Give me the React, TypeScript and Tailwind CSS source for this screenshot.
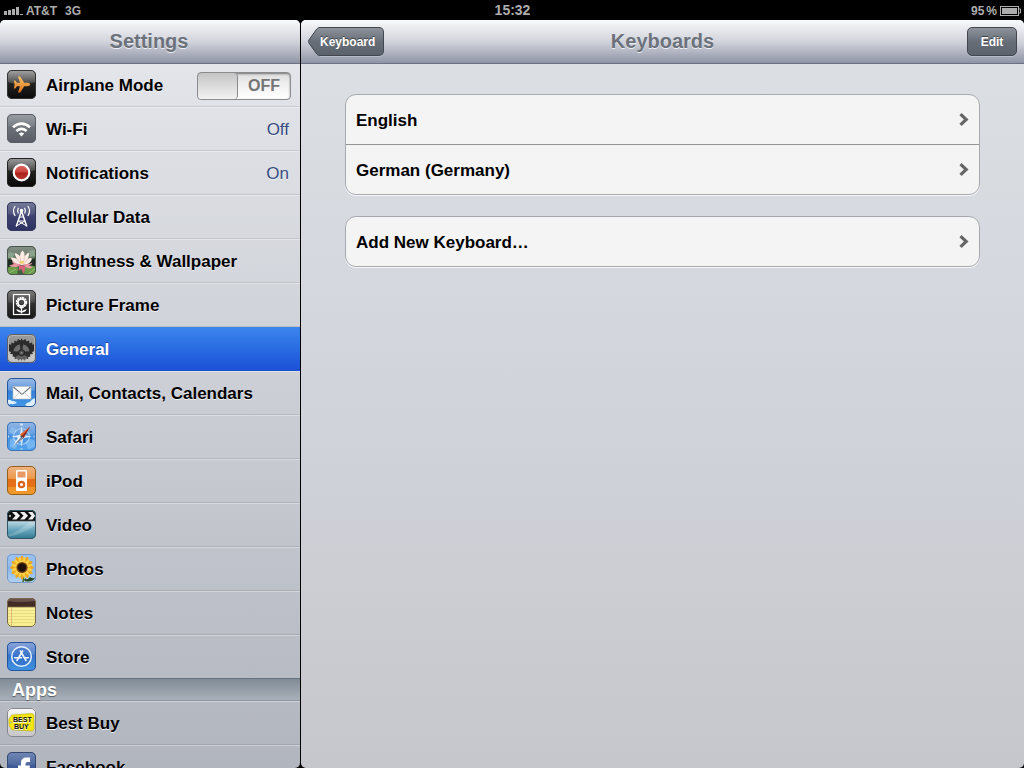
import type { ReactNode } from 'react'

type Row = {
  id: string
  label: string
  icon: ReactNode
  value?: string
  toggle?: boolean
  selected?: boolean
}

const SYSTEM_ROWS: Row[] = [
  { id: 'airplane', label: 'Airplane Mode', icon: <AirplaneIcon />, toggle: true },
  { id: 'wifi', label: 'Wi-Fi', icon: <WifiIcon />, value: 'Off' },
  { id: 'notifications', label: 'Notifications', icon: <NotificationsIcon />, value: 'On' },
  { id: 'cellular', label: 'Cellular Data', icon: <CellularIcon /> },
  { id: 'brightness', label: 'Brightness & Wallpaper', icon: <WallpaperIcon /> },
  { id: 'frame', label: 'Picture Frame', icon: <FrameIcon /> },
  { id: 'general', label: 'General', icon: <GeneralIcon />, selected: true },
  { id: 'mail', label: 'Mail, Contacts, Calendars', icon: <MailIcon /> },
  { id: 'safari', label: 'Safari', icon: <SafariIcon /> },
  { id: 'ipod', label: 'iPod', icon: <IpodIcon /> },
  { id: 'video', label: 'Video', icon: <VideoIcon /> },
  { id: 'photos', label: 'Photos', icon: <PhotosIcon /> },
  { id: 'notes', label: 'Notes', icon: <NotesIcon /> },
  { id: 'store', label: 'Store', icon: <StoreIcon /> },
]

const APP_ROWS: Row[] = [
  { id: 'bestbuy', label: 'Best Buy', icon: <BestBuyIcon /> },
  { id: 'facebook', label: 'Facebook', icon: <FacebookIcon /> },
]

const KEYBOARD_GROUPS = [['English', 'German (Germany)'], ['Add New Keyboard…']]

export default function App() {
  return (
    <div className="flex h-screen flex-col overflow-hidden bg-black font-['Liberation_Sans',Arial,sans-serif]">
      <StatusBar />
      <div className="flex min-h-0 flex-1 gap-px">
        {/* Settings list */}
        <aside className="flex w-[300px] shrink-0 flex-col overflow-hidden rounded-[5px] bg-linear-to-b from-[#e6e8ec] to-[#b1b5be]">
          <header className="flex h-11 shrink-0 items-center justify-center border-b border-[#6d7384] bg-linear-to-b from-[#f8f9fa] via-[#d2d4dc] to-[#9095a6] pr-0.5">
            <Title>Settings</Title>
          </header>
          <nav className="min-h-0 flex-1 overflow-y-auto [scrollbar-width:none]">
            <ul className="-mt-px">
              {SYSTEM_ROWS.map((row) => (
                <SettingsRow key={row.id} row={row} />
              ))}
            </ul>
            <h2 className="-mt-px flex h-[23px] items-center border-t border-b border-t-[#67727e] border-b-[#8d949d] bg-linear-to-b from-[#818c97] to-[#a9b0b9] pl-3 text-lg font-bold text-white [text-shadow:0_1px_1px_#555c66]">
              Apps
            </h2>
            <ul>
              {APP_ROWS.map((row) => (
                <SettingsRow key={row.id} row={row} />
              ))}
            </ul>
          </nav>
        </aside>

        {/* Keyboards pane */}
        <main className="flex min-w-0 flex-1 flex-col overflow-hidden rounded-[5px] bg-linear-to-b from-[#dde1e5] via-[#d1d4db] to-[#c6c7cc]">
          <header className="grid h-11 shrink-0 grid-cols-[1fr_auto_1fr] items-center border-b border-[#6d7384] bg-linear-to-b from-[#f8f9fa] via-[#d2d4dc] to-[#9095a6] px-[7px]">
            <BackButton label="Keyboard" />
            <Title>Keyboards</Title>
            <button
              type="button"
              className="h-[29px] w-[50px] justify-self-end rounded-[5px] border border-[#42474f] bg-linear-to-b from-[#8f949b] via-[#686e78] to-[#5b626c] text-xs font-bold text-white shadow-[0_1px_0_#b9bdc9] [text-shadow:0_-1px_0_#3f444b]"
            >
              Edit
            </button>
          </header>
          <div className="flex flex-col gap-[21px] px-11 pt-[30px]">
            {KEYBOARD_GROUPS.map((group) => (
              <ul
                key={group[0]}
                className="divide-y divide-[#929498] rounded-[11px] border border-[#a6a9ae] bg-[#f4f4f4] shadow-[0_1px_0_#f4f6f9]"
              >
                {group.map((label) => (
                  <li key={label} className="h-[50px] last:h-[49px]">
                    <a
                      href="#keyboard"
                      className="flex h-full items-center justify-between px-2.5 text-[17px] font-bold text-black"
                    >
                      <span className="pt-0.5 leading-6">{label}</span>
                      <Chevron />
                    </a>
                  </li>
                ))}
              </ul>
            ))}
          </div>
        </main>
      </div>
    </div>
  )
}

function StatusBar() {
  return (
    <div className="grid h-5 shrink-0 grid-cols-[1fr_auto_1fr] items-center bg-black pr-[3px] pl-1 text-xs font-bold text-[#adadad]">
      <div className="flex items-center">
        <svg width="19" height="8" viewBox="0 0 19 8" fill="#adadad" aria-hidden="true">
          <rect x="0" y="4" width="3" height="4" />
          <rect x="4" y="3" width="3" height="5" />
          <rect x="8" y="2" width="3" height="6" />
          <rect x="12" y="0" width="3" height="8" />
          <rect x="16" y="7" width="3" height="1" />
        </svg>
        <span className="ml-[3px]">AT&amp;T</span>
        <span className="ml-2">3G</span>
      </div>
      <span className="pb-0.5 text-sm">15:32</span>
      <div className="flex items-center justify-end">
        <span>95</span>
        <span className="mr-[3px] ml-0.5">%</span>
        <svg width="21" height="10" viewBox="0 0 21 10" aria-hidden="true">
          <rect x="0.5" y="0.5" width="18" height="9" fill="none" stroke="#adadad" />
          <rect x="2" y="2" width="15" height="6" fill="#adadad" />
          <path d="M19 3h1.5v4H19" fill="none" stroke="#adadad" />
        </svg>
      </div>
    </div>
  )
}

function Title({ children }: { children: ReactNode }) {
  return (
    <h1 className="pb-0.5 text-xl font-bold text-[#6c727b] [text-shadow:0_1px_0_#eceef2]">
      {children}
    </h1>
  )
}

function BackButton({ label }: { label: string }) {
  return (
    <button
      type="button"
      className="flex h-[29px] items-center justify-self-start text-xs font-bold text-white [text-shadow:0_-1px_0_#3f444b]"
    >
      <svg width="12" height="29" viewBox="0 0 12 29" aria-hidden="true">
        <defs>
          <linearGradient id="back" x1="0" y1="0" x2="0" y2="1">
            <stop offset="0" stopColor="#8f949b" />
            <stop offset="0.5" stopColor="#686e78" />
            <stop offset="1" stopColor="#5b626c" />
          </linearGradient>
        </defs>
        <path
          d="M12 0.5C10 0.5 9 1.5 8 3L0.7 13.3Q0.2 14.5 0.7 15.7L8 26C9 27.5 10 28.5 12 28.5"
          fill="url(#back)"
          stroke="#42474f"
        />
      </svg>
      <span className="flex h-full items-center rounded-r-[5px] border border-l-0 border-[#42474f] bg-linear-to-b from-[#8f949b] via-[#686e78] to-[#5b626c] pr-2 shadow-[0_1px_0_#b9bdc9]">
        {label}
      </span>
    </button>
  )
}

function Chevron() {
  return (
    <svg width="10" height="13" viewBox="0 0 10 13" aria-hidden="true">
      <path d="M1.5 1.2L7.2 6.5L1.5 11.8" fill="none" stroke="#666" strokeWidth="3.2" />
    </svg>
  )
}

function SettingsRow({ row }: { row: Row }) {
  const content = (
    <>
      {row.icon}
      <span className="flex-1 pt-0.5 leading-6">{row.label}</span>
    </>
  )
  return (
    <li
      className={
        row.selected
          ? 'h-11 border-y border-transparent bg-linear-to-b from-[#3c85ee] to-[#1b4fd6] bg-origin-border text-white [text-shadow:0_-1px_0_#1c4293]'
          : 'h-11 border-t border-b border-t-white/35 border-b-black/10 text-black [text-shadow:0_1px_0_#f1f2f4]'
      }
    >
      {row.toggle ? (
        <label className="flex h-full items-center gap-2.5 pr-[9px] pb-px pl-[7px] text-[17px] font-bold">
          {content}
          <input type="checkbox" role="switch" className="peer sr-only" />
          <span className="mt-0.5 flex h-7 w-[94px] overflow-hidden rounded-[4px] border border-[#8a8b8e] bg-linear-to-b from-[#dcdcdc] via-[#f2f2f2] to-white shadow-[inset_0_1px_2px_#777]">
            <span className="w-10 rounded-[4px] border-r border-[#8a8b8e] bg-linear-to-b from-[#c4c4c4] to-[#f3f3f3]" />
            <span className="flex flex-1 items-center justify-center text-base text-[#747474]">
              OFF
            </span>
          </span>
        </label>
      ) : (
        <a
          href={`#${row.id}`}
          className="flex h-full items-center gap-2.5 pr-[11px] pb-px pl-[7px] text-[17px] font-bold"
        >
          {content}
          {row.value && (
            <span className="pt-0.5 leading-6 font-normal text-[#374c80]">{row.value}</span>
          )}
        </a>
      )}
    </li>
  )
}

// Rounded 29px tile shared by every row icon
function Tile({
  id,
  from,
  to,
  border,
  gloss = 0.25,
  children,
}: {
  id: string
  from: string
  to: string
  border: string
  gloss?: number
  children: ReactNode
}) {
  return (
    <svg width="29" height="29" viewBox="0 0 29 29" className="shrink-0" aria-hidden="true">
      <defs>
        <linearGradient id={`${id}-bg`} x1="0" y1="0" x2="0" y2="1">
          <stop offset="0" stopColor={from} />
          <stop offset="1" stopColor={to} />
        </linearGradient>
        <linearGradient id={`${id}-gloss`} x1="0" y1="0" x2="0" y2="1">
          <stop offset="0" stopColor="#fff" stopOpacity={gloss * 1.8} />
          <stop offset="1" stopColor="#fff" stopOpacity={gloss * 0.5} />
        </linearGradient>
        <clipPath id={`${id}-clip`}>
          <rect width="29" height="29" rx="5" />
        </clipPath>
      </defs>
      <g clipPath={`url(#${id}-clip)`}>
        <rect width="29" height="29" fill={`url(#${id}-bg)`} />
        <path d="M0 0H29V12Q14.5 16 0 12Z" fill={`url(#${id}-gloss)`} />
        {children}
      </g>
      <rect x="0.5" y="0.5" width="28" height="28" rx="4.5" fill="none" stroke={border} />
    </svg>
  )
}

function AirplaneIcon() {
  return (
    <Tile id="airplane" from="#3c3c3c" to="#080808" border="#333" gloss={0.3}>
      <defs>
        <linearGradient id="plane" x1="0" y1="0" x2="0" y2="1">
          <stop offset="0" stopColor="#f6c468" />
          <stop offset="1" stopColor="#e0701a" />
        </linearGradient>
      </defs>
      <path
        d="M23.2 14.5C23.2 15.7 21.5 16.2 20 16.2H17.2L13.2 22.6H11L13 16.2H10L8.3 18.6H6.8L7.6 14.5L6.8 10.4H8.3L10 12.8H13L11 6.4H13.2L17.2 12.8H20C21.5 12.8 23.2 13.3 23.2 14.5Z"
        fill="url(#plane)"
      />
    </Tile>
  )
}

function WifiIcon() {
  return (
    <Tile id="wifi" from="#7f848b" to="#565b65" border="#5a5f67" gloss={0.12}>
      <g fill="none" stroke="#fff" strokeWidth="2.6">
        <path d="M6 13.2Q14.5 6.2 23 13.2" />
        <path d="M9.4 17Q14.5 12.8 19.6 17" />
      </g>
      <path d="M11.8 19.6Q14.5 17.6 17.2 19.6L14.5 22.4Z" fill="#fff" />
    </Tile>
  )
}

function NotificationsIcon() {
  return (
    <Tile id="notif" from="#3a3a3a" to="#060606" border="#222" gloss={0.28}>
      <defs>
        <linearGradient id="red" x1="0" y1="0" x2="0" y2="1">
          <stop offset="0" stopColor="#dd6b64" />
          <stop offset="0.48" stopColor="#cb443d" />
          <stop offset="0.52" stopColor="#ab1f1c" />
          <stop offset="1" stopColor="#c03a31" />
        </linearGradient>
      </defs>
      <circle cx="14.5" cy="14.5" r="7.8" fill="url(#red)" stroke="#fff" strokeWidth="2.2" />
    </Tile>
  )
}

function CellularIcon() {
  return (
    <Tile id="cell" from="#4b5078" to="#2d3264" border="#33385c" gloss={0.14}>
      <g fill="none" stroke="#fff">
        <path d="M14.5 9L9.2 24.5M14.5 9L19.8 24.5" strokeWidth="1.5" />
        <path d="M12.6 15H16.4M11.2 19H17.8M11.2 19L18.8 23.5M17.8 19L10.2 23.5" strokeWidth="1" />
        <path d="M11.4 5.8Q10 8.7 11.4 11.6M17.6 5.8Q19 8.7 17.6 11.6" strokeWidth="1.2" />
        <path d="M8.2 4Q4.8 8.8 8.2 14M20.8 4Q24.2 8.8 20.8 14" strokeWidth="1.2" />
      </g>
      <circle cx="14.5" cy="8.6" r="1.8" fill="#fff" />
    </Tile>
  )
}

function WallpaperIcon() {
  return (
    <Tile id="wall" from="#566459" to="#41633a" border="#4a5549" gloss={0.16}>
      <path d="M0 7Q5 5 8 8L5 12L0 12ZM22 5L29 3V10L23 11Z" fill="#8aa28c" />
      <path d="M0 13L9 15L7 20L0 22ZM20 15L29 12V20L21 20Z" fill="#1e2b22" />
      <path d="M0 22Q7 18 11 22L10 29H0ZM18 21Q24 18 29 21V29H17Z" fill="#6a9c4c" />
      <path d="M0 28L9 23M20 29L28 23" stroke="#a5c67c" strokeWidth="0.8" />
      <path
        d="M14.5 19Q5 18 4 11.5Q7.5 11 10 13Q7.5 9.5 8 7Q11 7.5 13 10.5Q13 6.5 15.5 4.5Q18 6.5 17.5 10.5Q20 7 22 6.5Q22.5 10 20.5 13Q23 11.5 25 12.5Q24 18.5 15.5 19Z"
        fill="#fbebe2"
      />
      <path
        d="M13 10.5Q13.2 14 14 17M17.5 10.5Q17.2 14 16.2 17M10 13Q11.5 16 13.5 17.5M20.5 13Q19 16 17 17.5"
        fill="none"
        stroke="#eab7b0"
        strokeWidth="0.7"
      />
      <path
        d="M5 14.5Q8 18 14.5 18.5L11 20.5Q6 22 2 19.5Q5 18.5 7 18Q5 16.5 5 14.5ZM25.5 16.5Q23 18 16 18.5L18 21Q22 23.5 25.5 21.5Q24 20 22 19.5Q25 18.5 25.5 16.5Z"
        fill="#e995a2"
      />
      <path d="M11.5 19.5H18.5Q17.5 22 18 24L16.5 28L14.5 23L11.5 24.5Q12.5 22 11.5 19.5Z" fill="#d9657b" />
      <ellipse cx="15" cy="16.5" rx="2.6" ry="1.4" fill="#f1ce72" />
    </Tile>
  )
}

function FrameIcon() {
  return (
    <Tile id="frame" from="#484848" to="#161616" border="#343434" gloss={0.16}>
      <rect x="6.5" y="4.5" width="16" height="20" fill="none" stroke="#fff" strokeWidth="1.2" />
      <g stroke="#fff" fill="none">
        <circle cx="14.5" cy="12.5" r="4.7" strokeWidth="2" strokeDasharray="1.9 0.56" />
        <circle cx="14.5" cy="12.5" r="3.5" strokeWidth="1.7" />
        <path d="M14.5 17V23.5" strokeWidth="1.4" />
        <path
          d="M14.5 22.2Q13.5 20 9.5 19.5Q10.5 22.5 14.5 22.2Q18.5 22.5 19.5 19.5Q15.5 20 14.5 22.2Z"
          fill="#fff"
          strokeWidth="0.3"
        />
      </g>
    </Tile>
  )
}

function GeneralIcon() {
  return (
    <Tile id="general" from="#9d9d9d" to="#7b7b7b" border="#5c5e61" gloss={0}>
      <path
        d="M2 20V10L4 11L4.5 8.5L7 9.5L7.5 6.5L10 7.5L11 5L13.5 6.5L14.5 4.5L16 6.5L18.5 5L19.5 7.5L22 6.5L22.5 9.5L25 8.5L25.5 11L27 10V20Z"
        fill="#2b2b2b"
      />
      <circle cx="14.5" cy="18.5" r="9.2" fill="#2d2d2d" />
      <path
        d="M6.5 17.2A8 8 0 0 1 12.8 10.6L13.5 15.2Q11.8 15.8 11.2 17.6ZM22.5 17.2A8 8 0 0 0 16.2 10.6L15.5 15.2Q17.2 15.8 17.8 17.6Z"
        fill="#6f6f6f"
      />
      <path d="M8 23L12 20.8Q14.5 23 17 20.8L21 23L18 26H11Z" fill="#5f5f5f" />
      <circle cx="14.5" cy="18.8" r="3" fill="#4a4a4a" stroke="#1d1d1d" strokeWidth="0.8" />
      <circle cx="14.5" cy="18.8" r="1.1" fill="#888" />
      <path
        d="M1 17L4 18L3 20L6 20.5L5 22.5L8 23L7.5 25L10.500 24.5L11 26.5L13.5 25L14.5 26.5L15.5 25L18 26.5L18.5 24.5L21.5 25L21 23L24 22.5L23 20.5L26 20L25 18L28 17V28H1Z"
        fill="#cdcdcd"
        fillOpacity="0.9"
      />
      <rect x="1.5" y="1.5" width="26" height="26" rx="3.5" fill="none" stroke="#bdbdbd" strokeOpacity="0.8" />
    </Tile>
  )
}

function MailIcon() {
  return (
    <Tile id="mail" from="#2d70cb" to="#4397e6" border="#275799" gloss={0.3}>
      <path
        d="M0 22Q3 21 5 23Q8 22.5 10 25Q7 26.5 4 26L0 27ZM18 27Q20 24 23 24Q25 20.5 29 20V28H20Z"
        fill="#def1fd"
      />
      <rect x="6" y="8.5" width="18" height="12.5" fill="#fafafa" stroke="#b8bcc4" strokeWidth="0.6" />
      <path d="M6.5 9L14 15.6Q15 16.4 16 15.6L23.5 9" fill="none" stroke="#6f7580" strokeWidth="1.1" />
      <path d="M6.5 20.6L12.5 14.5M23.5 20.6L17.5 14.5" stroke="#c5c8ce" strokeWidth="0.8" />
    </Tile>
  )
}

function SafariIcon() {
  return (
    <Tile id="safari" from="#3778cd" to="#53a4ef" border="#3e73b4" gloss={0.26}>
      <path
        d="M3 17Q8 15 10 19T8 27L3 25ZM18 20Q24 15 28 19V25L21 27ZM5 5L10 8L6 12L2 10Z"
        fill="#a4d5fa"
        fillOpacity="0.45"
      />
      <circle cx="14.5" cy="14.5" r="8" fill="none" stroke="#d7edff" strokeWidth="1.2" strokeOpacity="0.6" />
      <path
        d="M14.5 4L16.2 12.8L25 14.5L16.2 16.2L14.5 25L12.8 16.2L4 14.5L12.8 12.8Z"
        fill="#e9f5ff"
        fillOpacity="0.85"
      />
      <path
        d="M13.8 3.5V1.5L15.2 3.5V1.5M13.5 27H15.5M1.5 13.5V15.5M27 13.5V15.5"
        stroke="#eef8ff"
        strokeWidth="0.8"
        fill="none"
      />
      <path d="M23.2 4.5L16.6 16L12.9 12.6Z" fill="#e3602f" />
      <path d="M23.2 4.5L16.6 16L14.5 14.5Z" fill="#8a2f22" />
      <path d="M5.8 24.5L12.6 13L16.3 16.4Z" fill="#f5f7f9" />
      <path d="M5.8 24.5L14.5 14.5L16.3 16.4Z" fill="#7d8ba0" />
      <circle cx="14.5" cy="14.5" r="1.1" fill="#444" />
    </Tile>
  )
}

function IpodIcon() {
  return (
    <Tile id="ipod" from="#e27b2a" to="#f29a2a" border="#91601b" gloss={0.24}>
      <path d="M0 13H29V21H0Z" fill="#dc5207" fillOpacity="0.5" />
      <rect x="9" y="4" width="11" height="21" rx="1" fill="#fff" />
      <rect x="10.5" y="5.5" width="8" height="6" fill="#e89862" />
      <circle cx="14.5" cy="18.5" r="2.7" fill="none" stroke="#dd631a" strokeWidth="2.2" />
    </Tile>
  )
}

function VideoIcon() {
  return (
    <Tile id="video" from="#5398b0" to="#2e7690" border="#345664" gloss={0}>
      <defs>
        <linearGradient id="film" x1="0" y1="0" x2="0" y2="1">
          <stop offset="0" stopColor="#bfdae4" />
          <stop offset="0.5" stopColor="#66a5bb" />
          <stop offset="1" stopColor="#2f7891" />
        </linearGradient>
      </defs>
      <rect y="11" width="29" height="18" fill="url(#film)" />
      <path d="M0 25Q13 21 24 11H29V14Q18 24 0 27Z" fill="#fff" fillOpacity="0.2" />
      <rect width="29" height="11" fill="#0d0d0d" />
      <path
        d="M5 2H9.5L13 5.8L9.5 9.5H5L8.5 5.8ZM13 2H17.5L21 5.8L17.5 9.5H13L16.5 5.8ZM21 2H25.5L28 5.5V6L25.5 9.5H21L24.5 5.8Z"
        fill="#f0f0f0"
      />
      <circle cx="3" cy="6" r="1.2" fill="#aaa" />
      <path d="M0 10.8H29" stroke="#333" />
    </Tile>
  )
}

function PhotosIcon() {
  return (
    <Tile id="photos" from="#5b9ae8" to="#b3d3f2" border="#7898c4" gloss={0.22}>
      <path d="M15 19Q17 24 16 29" stroke="#47732b" strokeWidth="1.6" fill="none" />
      <path d="M18 24Q20 27 23 23Q25 25 28 23.5Q27 27 22 27.5Q18 28 17 26Z" fill="#294820" />
      <g fill="#f1a71b">
        {[0, 30, 60, 90, 120, 150].map((deg) => (
          <ellipse key={deg} cx="15" cy="13.5" rx="2.8" ry="12" transform={`rotate(${deg} 15 13.5)`} />
        ))}
      </g>
      <g fill="#fad046">
        {[15, 45, 75, 105, 135, 165].map((deg) => (
          <ellipse key={deg} cx="15" cy="13.5" rx="1.9" ry="11" transform={`rotate(${deg} 15 13.5)`} />
        ))}
      </g>
      <circle cx="15" cy="13.5" r="5.6" fill="#7a4312" />
      <circle cx="15" cy="13.5" r="4.2" fill="#1e120b" />
    </Tile>
  )
}

function NotesIcon() {
  return (
    <Tile id="notes" from="#fbf2a3" to="#f8ee8b" border="#76674c" gloss={0}>
      <path d="M0 12.5H29M0 15.5H29M0 18.5H29M0 21.5H29M0 24.5H29" stroke="#e0d583" strokeWidth="0.8" />
      <path d="M4.5 9V29" stroke="#dfac6c" strokeWidth="0.8" />
      <rect width="29" height="9" fill="#432b26" />
      <path d="M0 0H29V3Q14 5 0 3Z" fill="#6a524c" />
      <path d="M0 9.3H29" stroke="#c2b370" />
    </Tile>
  )
}

function StoreIcon() {
  return (
    <Tile id="store" from="#2c59b8" to="#3f94e2" border="#28549d" gloss={0.25}>
      <circle cx="14.5" cy="14.5" r="9.8" fill="#306ac7" fillOpacity="0.5" stroke="#e6f0fc" strokeWidth="1.5" />
      <g stroke="#f2f7fe" strokeWidth="1.6" fill="none" strokeLinecap="round">
        <path d="M15.6 9L10 18.5M13.4 9L19 18.5" />
        <path d="M7.6 15.8H14.6M17.8 15.8H21.4" />
      </g>
    </Tile>
  )
}

function BestBuyIcon() {
  return (
    <Tile id="bestbuy" from="#f4f4f4" to="#c5c5c8" border="#84868b" gloss={0.2}>
      <path
        d="M1.8 11.5L4.8 7L25 5.5L27 7V21L25.5 23L5 22L2.2 18Z"
        fill="#f5e610"
        stroke="#a99c00"
        strokeWidth="0.5"
      />
      <circle cx="3.9" cy="14.5" r="0.7" fill="#fff" stroke="#333" strokeWidth="0.3" />
      <g fontFamily="Liberation Sans, sans-serif" fontWeight="bold" fill="#111">
        <text x="6" y="13.5" fontSize="7">
          BEST
        </text>
        <text x="7" y="21" fontSize="7">
          BUY
        </text>
      </g>
    </Tile>
  )
}

function FacebookIcon() {
  return (
    <Tile id="facebook" from="#4b67a2" to="#344f88" border="#35496f" gloss={0.12}>
      <path
        d="M14 29V18H11V13.5H14V11Q14 5.5 19.5 5.5H23V10H20.5Q18.5 10 18.5 12V13.5H23L22.3 18H18.5V29Z"
        fill="#fff"
      />
    </Tile>
  )
}
